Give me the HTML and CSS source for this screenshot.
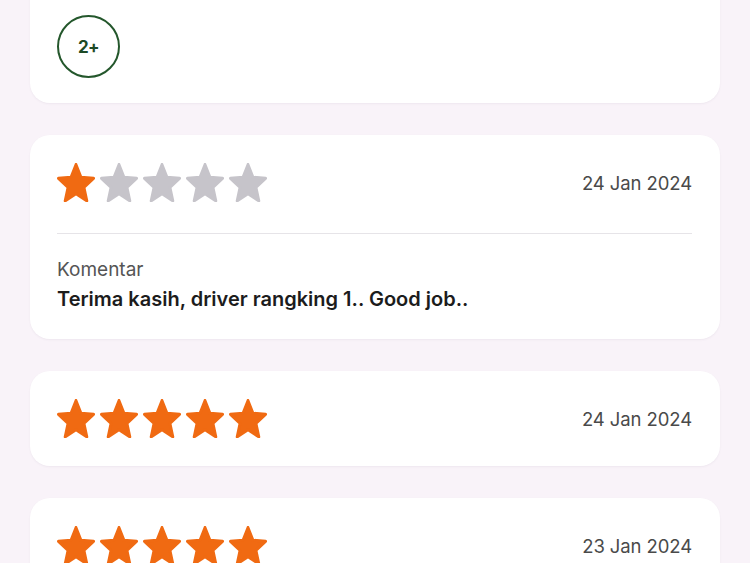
FILE: index.html
```html
<!DOCTYPE html>
<html>
<head>
<meta charset="utf-8">
<link rel="stylesheet" href="styles.css">
</head>
<body>
<svg width="0" height="0" class="defs">
  <defs>
    <symbol id="star" viewBox="1.2 1.2 21.6 20.4" preserveAspectRatio="none">
      <path d="M12 17.27L18.18 21l-1.64-7.03L22 9.24l-7.19-.61L12 2 9.19 8.63 2 9.24l5.46 4.73L5.82 21z" stroke="currentColor" stroke-width="1.6" stroke-linejoin="round" fill="currentColor"/>
    </symbol>
  </defs>
</svg>
<main class="list">
  <section class="card card-top">
    <div class="badge">2+</div>
  </section>

  <section class="card">
    <div class="row">
      <div class="stars">
        <svg class="star on"><use href="#star"/></svg>
        <svg class="star off"><use href="#star"/></svg>
        <svg class="star off"><use href="#star"/></svg>
        <svg class="star off"><use href="#star"/></svg>
        <svg class="star off"><use href="#star"/></svg>
      </div>
      <span class="date">24 Jan 2024</span>
    </div>
    <hr class="divider">
    <div class="label">Komentar</div>
    <div class="comment">Terima kasih, driver rangking 1.. Good job..</div>
  </section>

  <section class="card">
    <div class="row">
      <div class="stars">
        <svg class="star on"><use href="#star"/></svg>
        <svg class="star on"><use href="#star"/></svg>
        <svg class="star on"><use href="#star"/></svg>
        <svg class="star on"><use href="#star"/></svg>
        <svg class="star on"><use href="#star"/></svg>
      </div>
      <span class="date">24 Jan 2024</span>
    </div>
  </section>

  <section class="card">
    <div class="row">
      <div class="stars">
        <svg class="star on"><use href="#star"/></svg>
        <svg class="star on"><use href="#star"/></svg>
        <svg class="star on"><use href="#star"/></svg>
        <svg class="star on"><use href="#star"/></svg>
        <svg class="star on"><use href="#star"/></svg>
      </div>
      <span class="date">23 Jan 2024</span>
    </div>
  </section>
</main>
</body>
</html>
```
FILE: styles.css
```css
html, body {
  margin: 0;
  padding: 0;
  background: #f9f3f9;
  height: 100%;
  overflow: hidden;
}
body {
  font-family: Inter, "Noto Sans", "Liberation Sans", sans-serif;
  color: #1f1f1f;
}
.defs {
  position: absolute;
  width: 0;
  height: 0;
}
.list {
  display: flex;
  flex-direction: column;
  gap: 32px;
  padding: 0 30px;
}
.card {
  background: #ffffff;
  border-radius: 20px;
  padding: 28px 28px 28px 27px;
  box-shadow: 0 1px 2px rgba(120, 100, 130, 0.08);
}
.card-top {
  margin-top: -40px;
  padding-top: 55px;
  padding-bottom: 25px;
}
.badge {
  width: 63px;
  height: 63px;
  box-sizing: border-box;
  border: 2px solid #24572c;
  border-radius: 50%;
  display: flex;
  align-items: center;
  justify-content: center;
  font-size: 17px;
  font-weight: 700;
  color: #1d4a25;
  letter-spacing: -0.5px;
}
.row {
  display: flex;
  justify-content: space-between;
  align-items: center;
}
.stars {
  display: flex;
  gap: 5px;
}
.star {
  width: 38px;
  height: 39px;
  display: block;
}
.star.on { color: #f06a12; }
.star.off { color: #c6c4ca; }
.date {
  font-size: 18.5px;
  color: #4a4a4a;
  letter-spacing: -0.1px;
}
.divider {
  border: 0;
  border-top: 1.5px solid #e6e4e8;
  margin: 31px 0 25px;
}
.label {
  font-size: 19px;
  color: #555;
  line-height: 22px;
}
.comment {
  font-size: 20px;
  font-weight: 600;
  color: #1c1c1c;
  line-height: 24px;
  margin-top: 6px;
}
```
